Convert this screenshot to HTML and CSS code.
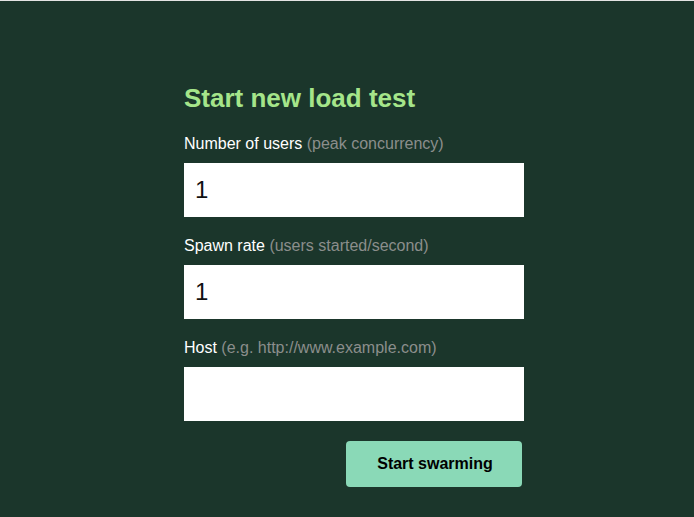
FILE: index.html
```html
<!DOCTYPE html>
<html>
<head>
<meta charset="utf-8">
<link rel="stylesheet" href="styles.css">
</head>
<body>
<main class="page">
  <form class="form">
    <h2 class="title">Start new load test</h2>
    <label class="label">Number of users <span class="hint">(peak concurrency)</span></label>
    <input class="field" type="text" value="1">
    <label class="label">Spawn rate <span class="hint">(users started/second)</span></label>
    <input class="field" type="text" value="1">
    <label class="label">Host <span class="hint">(e.g. http://www.example.com)</span></label>
    <input class="field" type="text" value="">
    <div class="actions">
      <button class="btn" type="button">Start swarming</button>
    </div>
  </form>
</main>
</body>
</html>
```
FILE: styles.css
```css
html, body {
  margin: 0;
  padding: 0;
  height: 100%;
}
body {
  background: #1b362b;
  border-top: 1px solid #e4e4e4;
  box-sizing: border-box;
  font-family: "Liberation Sans", Arial, sans-serif;
}
.page {
  padding: 82px 0 0 184px;
}
.form {
  width: 340px;
  display: flex;
  flex-direction: column;
}
.title {
  margin: 0 0 21px;
  font-size: 26px;
  line-height: 30px;
  font-weight: bold;
  color: #a5e58a;
}
.label {
  font-size: 16px;
  line-height: 18px;
  color: #ffffff;
  padding-top: 1px;
  margin-bottom: 10px;
}
.hint {
  color: #8b8e8c;
}
.field {
  box-sizing: border-box;
  width: 340px;
  height: 54px;
  border: none;
  outline: none;
  margin: 0 0 19px;
  padding: 0 11px;
  font-family: "Liberation Sans", Arial, sans-serif;
  font-size: 24px;
  color: #111111;
  background: #ffffff;
}
.actions {
  display: flex;
  justify-content: flex-end;
  padding-right: 2px;
  margin-top: 1px;
}
.btn {
  width: 176px;
  height: 46px;
  border: none;
  border-radius: 4px;
  background: #8ad9b7;
  color: #000;
  font-family: "Liberation Sans", Arial, sans-serif;
  font-size: 16px;
  font-weight: bold;
  padding: 0 0 0 2px;
}
```
